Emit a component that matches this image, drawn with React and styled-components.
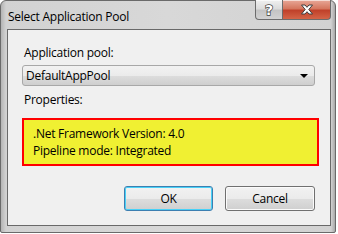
import React from "react";
import styled, { createGlobalStyle } from "styled-components";

const Global = createGlobalStyle`
  html, body { margin: 0; padding: 0; background: #ffffff; }
  body { font-family: "Open Sans", "Liberation Sans", sans-serif; font-size: 12px; color: #000; }
`;

const Window = styled.div`
  box-sizing: border-box;
  width: 336px;
  height: 233px;
  display: flex;
  flex-direction: column;
  border: 1px solid #6a6a6a;
  border-radius: 6px 6px 2px 2px;
  background: linear-gradient(to right, #b4b4b4 0px, #d2d2d2 5px, #d8d8d8 50%, #d2d2d2 calc(100% - 4px), #a8a8a8 100%);
  padding: 0 4px 6px 6px;
`;

const TitleBar = styled.div`
  height: 28px;
  display: flex;
  align-items: flex-start;
  justify-content: space-between;
`;

const Title = styled.span`
  padding: 7px 0 0 1px;
  font-size: 12px;
  letter-spacing: -0.25px;
  color: #000;
`;

const Caption = styled.div`
  display: flex;
  margin-top: -1px;
`;

const CapButton = styled.div`
  box-sizing: border-box;
  width: ${p => p.$w}px;
  height: 20px;
  display: flex;
  align-items: center;
  justify-content: center;
  border: 1px solid #6c6c6c;
  border-top: none;
  border-left: ${p => (p.$first ? "1px solid #6c6c6c" : "none")};
  border-radius: ${p => (p.$first ? "0 0 0 4px" : "0 0 4px 0")};
  background: ${p =>
    p.$red
      ? "linear-gradient(#e8a898 0%, #d5775f 45%, #c0412a 55%, #d46447 100%)"
      : "linear-gradient(#f0f0f0 0%, #dcdcdc 45%, #c4c4c4 55%, #d2d2d2 100%)"};
  box-shadow: inset 0 1px 0 rgba(255, 255, 255, 0.6);
`;

const Help = styled.span`
  color: #fff;
  font-family: "DejaVu Sans", sans-serif;
  font-weight: bold;
  font-size: 14px;
  line-height: 14px;
  margin-top: 1px;
  -webkit-text-stroke: 1.4px #3e3e3e;
  paint-order: stroke fill;
`;

const Client = styled.div`
  flex: 1;
  display: flex;
  flex-direction: column;
  background: #f0f0f0;
  border: 1px solid #696969;
  padding: 15px 15px 0 14px;
`;

const Label = styled.div`
  line-height: 15px;
  letter-spacing: -0.25px;
  margin-left: 2px;
`;

const Combo = styled.div`
  box-sizing: border-box;
  height: 21px;
  margin-top: 5px;
  display: flex;
  align-items: center;
  justify-content: space-between;
  padding: 0 6px 0 3px;
  border: 1px solid #a8a8a8;
  border-radius: 3px;
  background: linear-gradient(#f2f2f2 0%, #ebebeb 50%, #dddddd 51%, #cfcfcf 100%);
  letter-spacing: -0.25px;
`;

const Arrow = styled.span`
  width: 0;
  height: 0;
  border-left: 4px solid transparent;
  border-right: 4px solid transparent;
  border-top: 4px solid #000;
`;

const Props = styled(Label)`
  margin-top: 6px;
`;

const InfoBox = styled.div`
  box-sizing: border-box;
  height: 48px;
  margin: 11px -4px 0 0;
  padding: 5px 0 0 9px;
  background: #f0f032;
  border: 2px solid #ff0000;
  line-height: 17px;
  letter-spacing: -0.25px;
`;

const Buttons = styled.div`
  display: flex;
  justify-content: flex-end;
  gap: 12px;
  margin-top: 20px;
`;

const Button = styled.div`
  box-sizing: border-box;
  width: ${p => p.$w}px;
  height: 25px;
  display: flex;
  align-items: center;
  justify-content: center;
  border: 1px solid ${p => (p.$default ? "#3c7fb1" : "#707070")};
  border-radius: 3px;
  background: linear-gradient(#f2f2f2 0%, #ebebeb 50%, #dddddd 51%, #cfcfcf 100%);
  box-shadow: ${p => (p.$default ? "inset 0 0 0 1px #48d1f7" : "inset 0 0 0 1px #fbfbfb")};
  letter-spacing: -0.25px;
`;

function CloseGlyph() {
  return (
    <svg width="14" height="11" viewBox="0 0 14 11">
      <path
        d="M1.5 1 H5 L7 3.3 L9 1 H12.5 L8.8 5.5 L12.5 10 H9 L7 7.7 L5 10 H1.5 L5.2 5.5 Z"
        fill="#ffffff"
        stroke="#3e3e3e"
        strokeWidth="1"
        strokeLinejoin="round"
      />
    </svg>
  );
}

export default function App() {
  return (
    <>
      <Global />
      <Window>
        <TitleBar>
          <Title>Select Application Pool</Title>
          <Caption>
            <CapButton $w={28} $first><Help>?</Help></CapButton>
            <CapButton $w={48} $red><CloseGlyph /></CapButton>
          </Caption>
        </TitleBar>
        <Client>
          <Label>Application pool:</Label>
          <Combo>
            <span>DefaultAppPool</span>
            <Arrow />
          </Combo>
          <Props>Properties:</Props>
          <InfoBox>
            <div>.Net Framework Version: 4.0</div>
            <div>Pipeline mode: Integrated</div>
          </InfoBox>
          <Buttons>
            <Button $w={89} $default>OK</Button>
            <Button $w={90}>Cancel</Button>
          </Buttons>
        </Client>
      </Window>
    </>
  );
}
